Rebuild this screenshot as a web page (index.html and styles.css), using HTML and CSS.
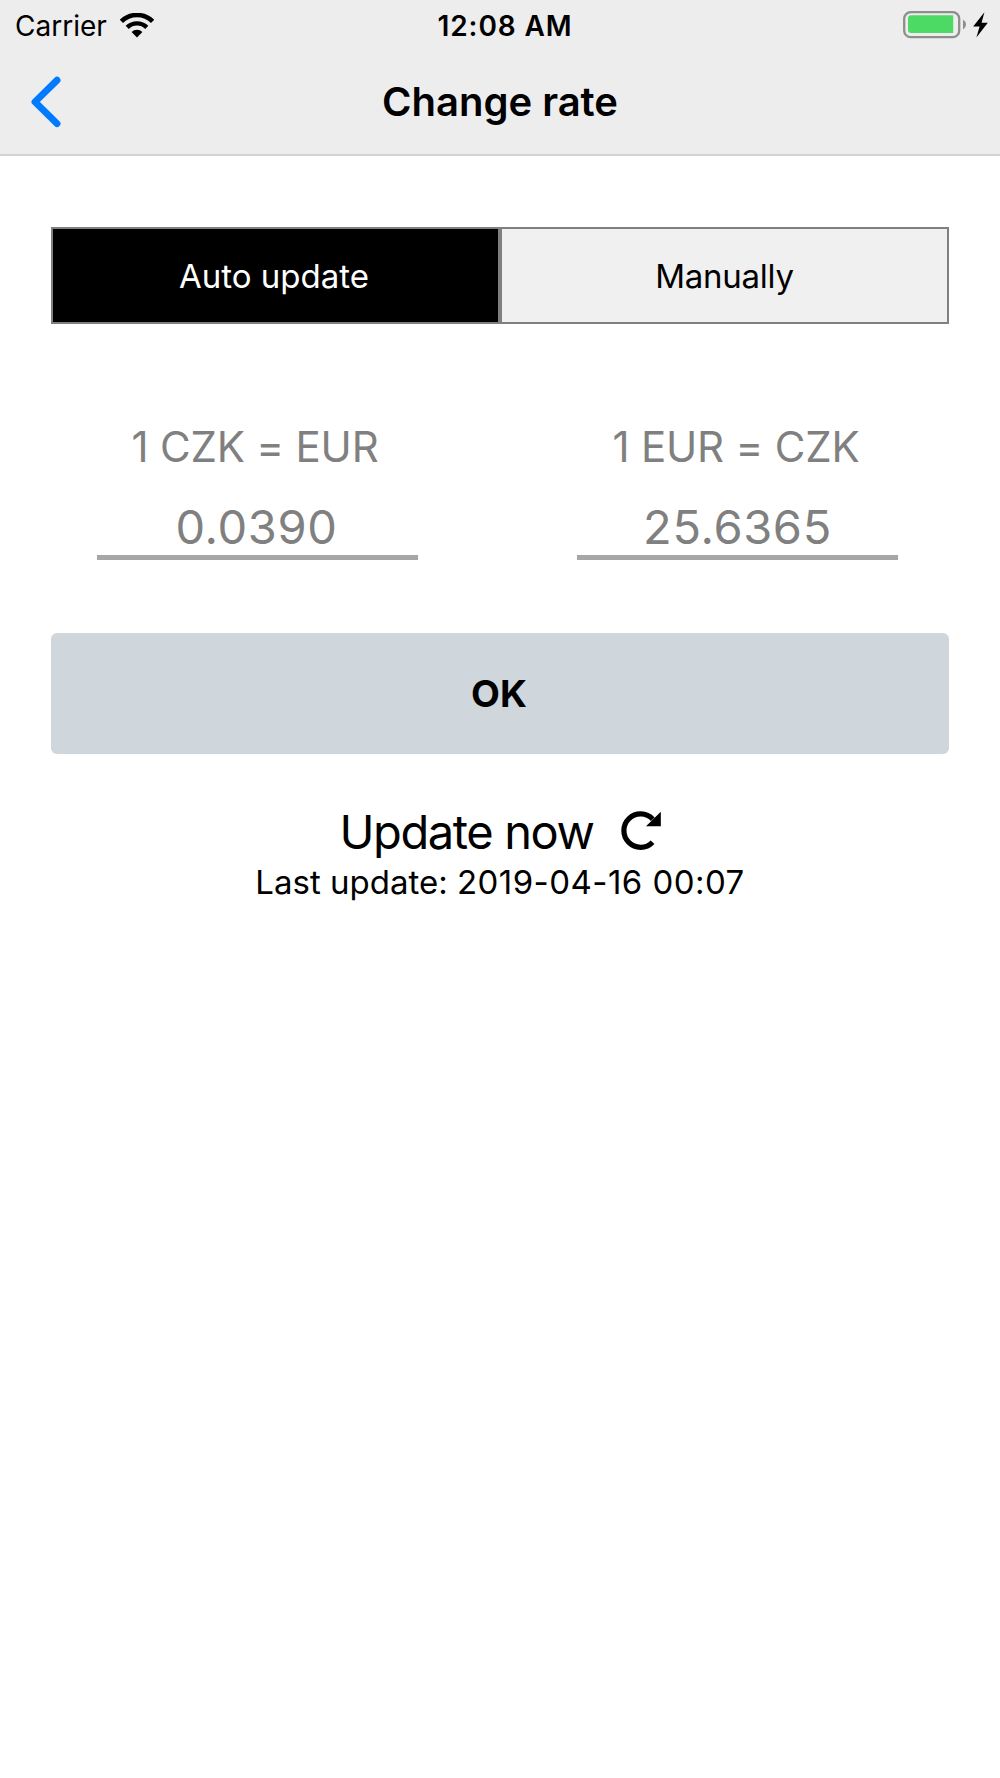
FILE: index.html
```
<!DOCTYPE html>
<html lang="en">
<head>
<meta charset="utf-8">
<title>Change rate</title>
<link rel="stylesheet" href="styles.css">
</head>
<body>
<header class="header">
  <div class="status">
    <div class="status-left">
      <span class="carrier">Carrier</span>
      <svg class="wifi" width="34" height="25" viewBox="0 0 34 25">
        <path d="M1.4 8.4A22.2 22.2 0 0 1 32.6 8.4" fill="none" stroke="#000" stroke-width="4.6"/>
        <path d="M7.2 14.4A14 14 0 0 1 26.8 14.4" fill="none" stroke="#000" stroke-width="4.4"/>
        <path d="M11.600 18.900A7.800 7.800 0 0 1 22.400 18.900L17 24.500Z"/>
      </svg>
    </div>
    <span class="clock">12:08 AM</span>
    <div class="status-right">
      <svg class="battery" width="86" height="28" viewBox="0 0 86 28">
        <rect x="1.200" y="1.200" width="55" height="25" rx="6.500" fill="none" stroke="#8e8e8e" stroke-width="2.300"/>
        <path d="M8 4.200H50.200V22H8A3 3 0 0 1 5 19V7.200A3 3 0 0 1 8 4.200Z" fill="#4cd964"/>
        <path d="M60 8.500Q63 10.500 63 13.500T60 18.700Z" fill="#8e8e8e"/>
        <path d="M81.400 1.200L70.200 15.600H76.600L73.400 26.400L84.800 11.800H78.600Z"/>
      </svg>
    </div>
  </div>
  <nav class="nav">
    <svg class="back" width="31" height="52" viewBox="0 0 31 52">
      <path d="M27 4.200L5 25.900L27 47.600" fill="none" stroke="#007aff" stroke-width="6.900" stroke-linecap="round" stroke-linejoin="round"/>
    </svg>
    <h1 class="title">Change rate</h1>
  </nav>
</header>
<main class="content">
  <div class="segments">
    <button class="segment active">Auto update</button>
    <button class="segment manual">Manually</button>
  </div>
  <div class="rates">
    <div class="rate">
      <div class="pair first">1 CZK = EUR</div>
      <div class="value first">0.0390</div>
    </div>
    <div class="rate">
      <div class="pair second">1 EUR = CZK</div>
      <div class="value">25.6365</div>
    </div>
  </div>
  <button class="ok">OK</button>
  <div class="update">
    <span class="update-label">Update now</span>
    <svg width="40" height="40" viewBox="0 0 40 40">
      <path d="M31.800 8.200A16.700 16.700 0 1 0 31.600 31.200" fill="none" stroke="#000" stroke-width="5.200"/>
      <path d="M39.800 0.800V15.200H25Z"/>
    </svg>
  </div>
  <div class="last">Last update: <span class="date">2019-04-16 00:07</span></div>
</main>
</body>
</html>
```
FILE: styles.css
```
* { box-sizing: border-box; }
body {
  margin: 0;
  min-height: 1778px;
  background: #fff;
  color: #000;
  font-family: Inter, "Liberation Sans", sans-serif;
  white-space: nowrap;
}
button {
  margin: 0;
  padding: 0;
  border: 0;
  color: inherit;
  font: inherit;
}
.header {
  height: 156px;
  background: #ededed;
  border-bottom: 2px solid #d3d3d3;
}
.status {
  display: grid;
  grid-template-columns: 1fr auto 1fr;
  align-items: center;
  height: 51px;
  padding: 0 11px 0 15px;
  font-size: 28px;
  line-height: 53px;
}
.status-left { display: flex; align-items: center; gap: 13.5px; }
.wifi { margin-bottom: 3px; }
.battery { margin-bottom: 4px; }
.status-right { display: flex; justify-content: flex-end; }
.clock { padding-left: 6px; font-weight: 600; letter-spacing: 0.9px; }
.nav {
  display: grid;
  grid-template-columns: 100px 1fr 100px;
  align-items: center;
  height: 101px;
}
.back { margin-left: 30px; }
.title {
  margin: 0;
  font-size: 40px;
  font-weight: 600;
  line-height: 60px;
  text-align: center;
}
.content { padding: 71px 51px 0; }
.segments { display: grid; grid-template-columns: 1fr 1fr; height: 97px; }
.segment {
  border: 2px solid #808080;
  background: #f0f0f0;
  font-size: 33px;
}
.segment.active { padding-right: 3px; background: #000; color: #fff; }
.segment.manual { letter-spacing: -0.25px; }
.rates {
  display: flex;
  gap: 159px;
  margin-top: 98px;
  padding-left: 46px;
  color: #808080;
  text-align: center;
}
.rate { width: 321px; }
.pair { font-size: 42px; line-height: 50px; letter-spacing: -0.2px; }
.pair.first { padding-right: 5px; }
.pair.second { padding-right: 3px; }
.value {
  margin-top: 24px;
  height: 64px;
  border-bottom: 5px solid #a6a6a6;
  font-size: 47px;
  line-height: 61px;
  letter-spacing: 0.65px;
}
.value.first { padding-right: 2px; }
.ok {
  display: block;
  width: 100%;
  height: 121px;
  margin-top: 73px;
  padding-right: 2px;
  border-radius: 6px;
  background: #cfd7dd;
  font-size: 37.5px;
  font-weight: 700;
}
.update {
  display: flex;
  justify-content: center;
  align-items: center;
  gap: 27px;
  height: 56px;
  margin-top: 49px;
  font-size: 47px;
  letter-spacing: -1.4px;
}
.last {
  font-size: 33px;
  line-height: 46px;
  text-align: center;
}
.date { letter-spacing: 0.45px; }
```
